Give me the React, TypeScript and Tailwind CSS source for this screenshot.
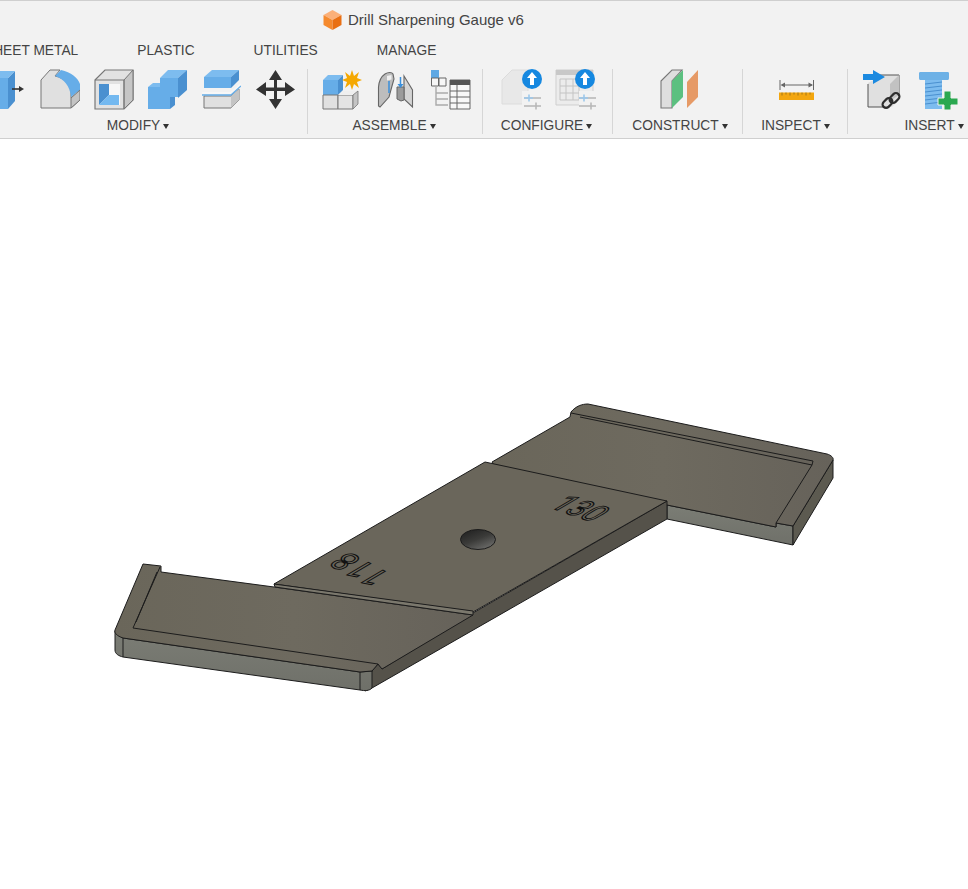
import { ReactNode } from 'react'

function Icon({ width = 40, children }: { width?: number; children: ReactNode }) {
  return (
    <svg width={width} height={42} viewBox={`0 0 ${width} 42`} className="block shrink-0">
      {children}
    </svg>
  )
}

const blue = '#66ade8'
const blueDark = '#4a90d0'
const edge = '#777'

function ExtrudeIcon() {
  return (
    <Icon>
      <path d="M0 9H22V40H0Z" fill={blue} />
      <path d="M22 9L29 2V32L22 40Z" fill={blueDark} />
      <path d="M29 2H6L0 9H22Z" fill="#7dbcef" />
      <path d="M26 20H34" stroke="#333" strokeWidth="1.6" />
      <path d="M33 17L38 20L33 23Z" fill="#333" />
    </Icon>
  )
}

function FilletIcon() {
  return (
    <Icon>
      <path d="M1 11L10 1H20L15 7C24 9 30 15 31 22V29L40 22V31L31 39H1Z" fill="#e0e0e0" stroke={edge} strokeWidth="1" />
      <path d="M15 7L21 1C31 3 38 9 40 15V21L31 28C30 17 24 10 15 7Z" fill={blue} />
      <path d="M31 39V29L40 21V31Z" fill="#c4c4c4" stroke={edge} strokeWidth="1" />
    </Icon>
  )
}

function ShellIcon() {
  return (
    <Icon>
      <path d="M1 11L11 1H39V31L30 40H1Z" fill="#e2e2e2" stroke={edge} strokeWidth="1.2" />
      <path d="M30 11L39 1V31L30 40Z" fill="#c6c6c6" stroke={edge} strokeWidth="1" />
      <path d="M1 11H30V40" fill="none" stroke={edge} strokeWidth="1" />
      <path d="M5 15H26V36H5Z" fill="#f7f7f7" />
      <path d="M5 15H15V26L5 36Z" fill="#4a90d0" />
      <path d="M15 26H25V36H5Z" fill="#74b9f0" />
    </Icon>
  )
}

function CombineIcon() {
  return (
    <Icon>
      <path d="M13 9L21 1H40L31 9Z" fill="#7dbcef" />
      <path d="M13 9H31V28H23V18H13Z" fill={blue} />
      <path d="M31 9L40 1V21L31 29Z" fill={blueDark} />
      <path d="M1 18L6 14H13V18Z" fill="#7dbcef" />
      <path d="M1 18H23V40H1Z" fill={blue} />
      <path d="M23 28H28V36L23 40Z" fill={blueDark} />
    </Icon>
  )
}

function SplitIcon() {
  return (
    <Icon>
      <path d="M11 1H38L30 8H3Z" fill="#7dbcef" />
      <path d="M3 8H30V19H3Z" fill={blue} />
      <path d="M30 8L38 1V11L30 19Z" fill={blueDark} />
      <path d="M3 27H30L38 20V31L30 39H3Z" fill="#e0e0e0" stroke={edge} strokeWidth="1" />
      <path d="M30 27L38 20V31L30 39Z" fill="#c4c4c4" />
      <path d="M1 24H30L40 15" fill="none" stroke="#f7f7f7" strokeWidth="2" />
      <path d="M1 26H30L40 17" fill="none" stroke="#66ade8" strokeWidth="1.3" />
    </Icon>
  )
}

function MoveIcon() {
  return (
    <Icon width={41}>
      <path
        d="M20.5 1L27 11H22V18.5H30V13L40 20.5L30 27V22H22V30H27L20.5 40L14 30H19V22H11V27L1 20.5L11 13V18.5H19V11H14Z"
        fill="#333"
      />
    </Icon>
  )
}

function NewComponentIcon() {
  return (
    <Icon>
      <path d="M1 11L6 6H21L16 11Z" fill="#7dbcef" />
      <path d="M1 11H16V26H1Z" fill={blue} />
      <path d="M16 11L21 6V21L16 26Z" fill={blueDark} />
      <path d="M1 26H16V40H1Z" fill="#e0e0e0" stroke={edge} strokeWidth="1" />
      <path d="M16 26H31V40H16Z" fill="#e4e4e4" stroke={edge} strokeWidth="1" />
      <path d="M16 26L21 22H36L31 26Z" fill="#efefef" />
      <path d="M31 26L36 22V35L31 40Z" fill="#c4c4c4" stroke={edge} strokeWidth="0.8" />
      <path
        d="M30 1L32 7L37 3L35 9L40 11L35 13L37 19L32 15L30 21L28 15L23 19L25 13L20 11L25 9L23 3L28 7Z"
        fill="#f5a800"
      />
    </Icon>
  )
}

function JointIcon() {
  return (
    <Icon width={38}>
      <path d="M1.500 18C2 12 5 7 8 5C11 3 15 3 16 5L17 10L15 17L12 28L3 38L1.500 37Z" fill="#bdbdbd" stroke="#666" strokeWidth="1.1" />
      <path d="M10 7L14.500 6V10.500L10 11.500Z" fill="#f0f0f0" />
      <path d="M27 7L35.500 21V38L27 30Z" fill="#d4d4d4" stroke="#666" strokeWidth="1.1" />
      <path d="M20 18H27V31L24 32L20 30Z" fill="#9b9b9b" stroke="#666" strokeWidth="1" />
      <path d="M12 12V24" stroke="#3a8fdb" strokeWidth="1.5" />
      <path d="M23.500 8V16" stroke="#3a8fdb" strokeWidth="1.5" />
      <path d="M20.500 15H26.500L23.500 19Z" fill="#3a8fdb" />
    </Icon>
  )
}

function TableIcon() {
  return (
    <Icon width={41}>
      <path d="M1 1H9V9H1Z" fill="#5ea8e4" />
      <path d="M1.500 9H8.500V17H1.500ZM9 9H16V17H9Z" fill="#f6f6f6" stroke="#666" strokeWidth="1" />
      <path d="M6 17V36H18M6 24H18M6 30H18" fill="none" stroke="#aaa" strokeWidth="1.4" />
      <path d="M20 11H40V40H20Z" fill="#f8f8f8" stroke="#666" strokeWidth="1" />
      <path d="M20 11H40V16H20Z" fill="#555" />
      <path d="M20 22H40M20 28H40M20 34H40M27 16V40" stroke="#666" strokeWidth="1" />
    </Icon>
  )
}

function UpBadge({ x, y }: { x: number; y: number }) {
  return (
    <g>
      <circle cx={x} cy={y} r="10" fill="#1688e0" />
      <path d={`M${x} ${y - 7}L${x + 5} ${y - 1}H${x + 2}V${y + 6}H${x - 2}V${y - 1}H${x - 5}Z`} fill="#fff" />
    </g>
  )
}

function PaleSliders({ x }: { x: number }) {
  return (
    <g strokeWidth="1.6">
      <path d={`M${x} 29H${x + 17}`} stroke="#b8b8b8" />
      <path d={`M${x} 37H${x + 17}`} stroke="#b8b8b8" />
      <path d={`M${x + 5} 25.500V32.500M${x} 29H${x + 9}`} stroke="#9cc8ec" />
      <path d={`M${x + 12} 33.500V40.500`} stroke="#b8b8b8" />
    </g>
  )
}

function ConfigureCubeIcon() {
  return (
    <Icon width={42}>
      <path d="M2 11L12 1H28V35H2Z" fill="#e8e8e8" stroke="#dcdcdc" strokeWidth="1" />
      <rect x="22" y="22" width="20" height="20" fill="#f2f2f2" />
      <PaleSliders x={24} />
      <UpBadge x={32} y={10} />
    </Icon>
  )
}

function ConfigureTableIcon() {
  return (
    <Icon width={42}>
      <path d="M1 1H38V36H1Z" fill="#ececec" stroke="#cfcfcf" strokeWidth="1" />
      <path d="M1 1H38V6H1Z" fill="#c8c8c8" />
      <path d="M5 10H24V31H5ZM5 17H24M5 24H24M11 10V31M18 10V31" fill="none" stroke="#c4c4c4" strokeWidth="1" />
      <rect x="24" y="22" width="18" height="20" fill="#f2f2f2" />
      <PaleSliders x={24} />
      <UpBadge x={30} y={10} />
    </Icon>
  )
}

function ConstructIcon() {
  return (
    <Icon width={39}>
      <path d="M1 12L12 1H22L12 12V39H1Z" fill="#dedede" stroke="#777" strokeWidth="1.1" />
      <path d="M12 12L23 1V28L12 39Z" fill="#5cc080" />
      <path d="M27 13L38 1V28L27 39Z" fill="#e69a66" />
    </Icon>
  )
}

function InspectIcon() {
  return (
    <Icon width={36}>
      <path d="M1 11V21M34.500 11V21M3 16H33" stroke="#666" strokeWidth="1" />
      <path d="M1.500 16L6 13.500V18.500ZM34 16L29.500 13.500V18.500Z" fill="#666" />
      <rect x="0" y="23.500" width="35" height="7.500" fill="#f3a60f" />
      <path d="M3 23.500V26.500M7 23.500V25.500M11 23.500V26.500M15 23.500V25.500M19 23.500V26.500M23 23.500V25.500M27 23.500V26.500M31 23.500V25.500" stroke="#8a6a1a" strokeWidth="0.8" />
    </Icon>
  )
}

function InsertDerivedIcon() {
  return (
    <Icon width={42}>
      <path d="M6 38V14L21 6H37V31L30 38Z" fill="#e0e0e0" />
      <path d="M6 15V38H26M14 6H37V26" fill="none" stroke="#555" strokeWidth="1" />
      <path d="M28 15L37 6V26L28 32Z" fill="#c2c2c2" />
      <path d="M1 5H11V1L23 8L11 15V11H1Z" fill="#1c8ae0" />
      <g fill="none" stroke="#2d2d2d" strokeWidth="2.200">
        <rect x="20" y="30.500" width="11" height="7" rx="3.500" transform="rotate(-45 25.500 34)" />
        <rect x="27" y="25.500" width="11" height="7" rx="3.500" transform="rotate(-45 32.500 29)" />
      </g>
    </Icon>
  )
}

function BoltIcon() {
  return (
    <Icon>
      <path d="M1 4C1 3 2 3 3 3H29C30 3 31 3 31 4V9C31 11 30 11 29 11H3C2 11 1 11 1 9Z" fill="#6db1e6" />
      <path d="M7 11H24V40H7Z" fill="#7dbcef" />
      <path d="M7 15L24 13M7 19L24 17M7 23L24 21M7 27L24 25M7 31L24 29M7 35L24 33" stroke="#4a90d0" strokeWidth="1" />
      <path d="M26 22H33V29H40V36H33V41H26V36H20V29H26Z" fill="#2aa84f" stroke="#f2f2f2" strokeWidth="1" />
    </Icon>
  )
}

function Caret() {
  return <span className="ml-[3px] inline-block h-0 w-0 border-x-[3px] border-t-[5px] border-x-transparent border-t-[#333]" />
}

function Group({
  label,
  width,
  labelShift = '',
  padding,
  children,
}: {
  label: string
  width: string
  labelShift?: string
  padding: string
  children: ReactNode
}) {
  return (
    <div className={`flex h-full shrink-0 flex-col ${width}`}>
      <div className={`flex h-[42px] items-start ${padding}`}>{children}</div>
      <div className={`mt-[7px] flex h-[16px] items-center justify-center whitespace-nowrap leading-none ${labelShift}`}>
        {label}
        <Caret />
      </div>
    </div>
  )
}

function Divider() {
  return <div className="h-full w-px shrink-0 bg-[#d6d6d6]" />
}

function GaugeModel() {
  const line = { stroke: '#1c1c1c', strokeWidth: 1, strokeLinejoin: 'round' as const }
  const engraved = {
    fontFamily: "Roboto, 'Liberation Sans', sans-serif",
    fontSize: 20,
    fill: 'none',
    stroke: '#111',
    strokeWidth: 1.2,
    vectorEffect: 'non-scaling-stroke' as const,
  }
  return (
    <svg width={968} height={750} viewBox="0 139 968 750" className="block">
      <defs>
        <linearGradient id="topFace" x1="0" y1="0" x2="1" y2="0">
          <stop offset="0" stopColor="#6a665a" />
          <stop offset="0.5" stopColor="#6e6a5f" />
          <stop offset="1" stopColor="#66625a" />
        </linearGradient>
        <linearGradient id="frontFace" x1="0" y1="0" x2="0" y2="1">
          <stop offset="0" stopColor="#7b7d75" />
          <stop offset="1" stopColor="#6f7069" />
        </linearGradient>
        <linearGradient id="hole" x1="0" y1="0" x2="0.7" y2="1">
          <stop offset="0" stopColor="#1d1d1d" />
          <stop offset="0.55" stopColor="#3b3b39" />
          <stop offset="1" stopColor="#6b6b69" />
        </linearGradient>
      </defs>

      {/* right wing */}
      <path d="M667 505L776 527V523L793 526V545L667 519Z" fill="url(#frontFace)" {...line} />
      <path d="M833 460V478L793 545V526Z" fill="#5c5a50" {...line} />
      <path
        d="M492 462L570 417L571 412C576 406 582 404 588 404L827 454C831 455 834 458 833 460L793 526L776 523V527L667 505L660 510L500 475Z"
        fill="url(#topFace)"
        {...line}
      />
      <path d="M571 413L813 461L812 465L776 523M580 417L812 465" fill="none" {...line} />

      {/* long side of the plate and left wing */}
      <path d="M667 501V519L372 688L365 691L372 671L378 664L382 669L473 613Z" fill="#55524a" {...line} />
      <path
        d="M115 631L123 638L360 672L372 671V688C369 691 365 691 360 690L123 657C119 656 115 654 115 650Z"
        fill="url(#frontFace)"
        {...line}
      />
      <path d="M123 638V657M360 672V690" fill="none" {...line} />
      <path
        d="M143 564L161 566V572L274 587L473 615L382 669L378 664L372 671L360 672L123 638C117 636 114 633 115 630Z"
        fill="url(#topFace)"
        {...line}
      />
      <path d="M160 567L133 628L378 664M157 572L136 622" fill="none" {...line} />

      {/* middle plate */}
      <path d="M485 462L667 501L473 612L274 584Z" fill="#6a665b" {...line} />
      <path d="M274 584L473 611V615L275 587Z" fill="#7b786d" {...line} />

      <text transform="matrix(1.3 .45 -1.5 .885 548 507)" {...engraved}>
        130
      </text>
      <text transform="matrix(-1.3 -.7 1.5 -.885 392 575)" {...engraved}>
        118
      </text>

      <ellipse cx="478" cy="539.500" rx="17.500" ry="10" fill="url(#hole)" stroke="#1c1c1c" />
    </svg>
  )
}

export default function App() {
  return (
    <div className="flex h-[889px] w-[968px] flex-col overflow-hidden bg-white font-['Liberation_Sans',Arial,sans-serif] text-[13.75px] text-[#444]">
      <header className="h-[139px] shrink-0 overflow-hidden border-y border-[#cfcfcf] bg-[#f2f2f2]">
        <div className="flex h-[38px] items-center gap-[6px] pl-[323px] text-[15px]">
          <svg width="19" height="20" viewBox="0 0 19 20" className="block">
            <path d="M9.500 0L18.500 5L9.500 10L0.500 5Z" fill="#fbb079" />
            <path d="M0.500 5L9.500 10V20L0.500 15Z" fill="#f58a2e" />
            <path d="M18.500 5L9.500 10V20L18.500 15Z" fill="#e96f12" />
          </svg>
          <span>Drill Sharpening Gauge v6</span>
        </div>
        <div className="-ml-[16px] flex h-[24px] items-center gap-[59px] whitespace-nowrap">
          <span>SHEET METAL</span>
          <span>PLASTIC</span>
          <span>UTILITIES</span>
          <span>MANAGE</span>
        </div>
        <div className="-ml-[31px] mt-[6px] flex h-[65px]">
          <Group label="MODIFY" width="w-[338px]" padding="pl-[17px] gap-[13.75px]">
            <ExtrudeIcon />
            <FilletIcon />
            <ShellIcon />
            <CombineIcon />
            <SplitIcon />
            <MoveIcon />
          </Group>
          <Divider />
          <Group label="ASSEMBLE" width="w-[174px]" labelShift="pr-[2px]" padding="pl-[14px] gap-[15px]">
            <NewComponentIcon />
            <JointIcon />
            <TableIcon />
          </Group>
          <Divider />
          <Group label="CONFIGURE" width="w-[129px]" labelShift="pr-[2px]" padding="pl-[17px] gap-[13px]">
            <ConfigureCubeIcon />
            <ConfigureTableIcon />
          </Group>
          <Divider />
          <Group label="CONSTRUCT" width="w-[129px]" labelShift="pl-[5px]" padding="pl-[47px]">
            <ConstructIcon />
          </Group>
          <Divider />
          <Group label="INSPECT" width="w-[104px]" labelShift="pl-[1px]" padding="pl-[36px]">
            <InspectIcon />
          </Group>
          <Divider />
          <Group label="INSERT" width="w-[120px]" labelShift="pl-[52px]" padding="pl-[14px] gap-[14px]">
            <InsertDerivedIcon />
            <BoltIcon />
          </Group>
        </div>
      </header>
      <main className="flex-1 bg-white">
        <GaugeModel />
      </main>
    </div>
  )
}
